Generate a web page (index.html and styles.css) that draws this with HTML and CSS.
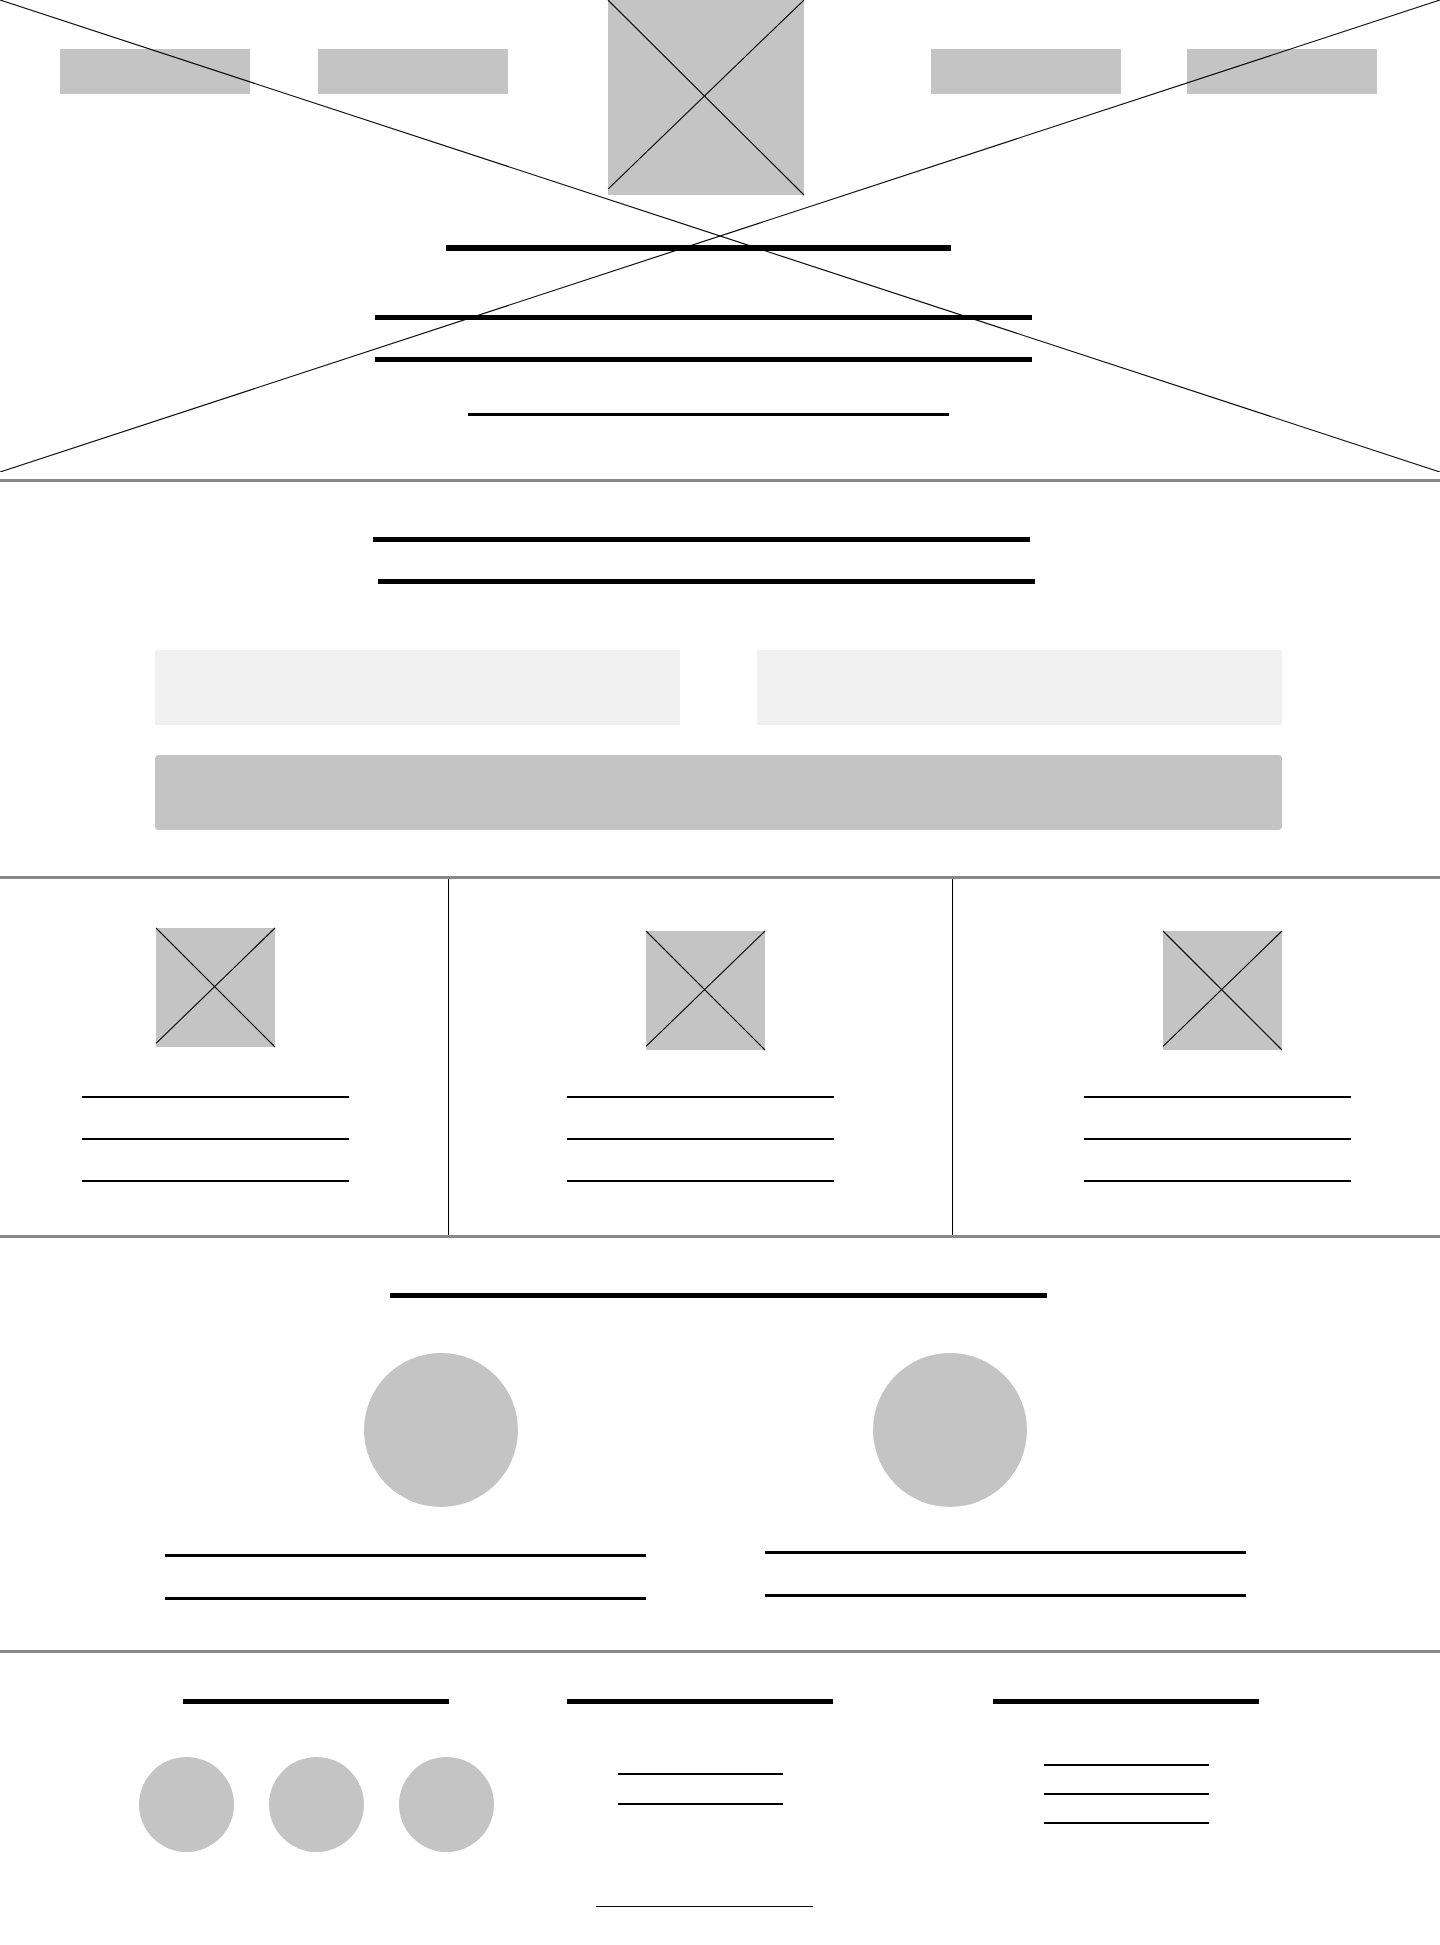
FILE: index.html
```html
<!DOCTYPE html>
<html lang="en">
<head>
  <meta charset="UTF-8">
  <meta name="viewport" content="width=device-width, initial-scale=1.0">
  <title>Landing page wireframe</title>
  <link rel="stylesheet" href="styles.css">
</head>
<body>
  <header class="hero">
    <nav class="nav">
      <div class="nav-group nav-left">
        <a class="nav-item" href="#"></a>
        <a class="nav-item" href="#"></a>
      </div>
      <div class="logo ph">
        <svg class="ph-x" viewBox="0 0 100 100" preserveAspectRatio="none"><line x1="0" y1="0" x2="100" y2="100"/><line x1="100" y1="0" x2="0" y2="97"/></svg>
      </div>
      <div class="nav-group nav-right">
        <a class="nav-item" href="#"></a>
        <a class="nav-item" href="#"></a>
      </div>
    </nav>

    <div class="bar hero-title"></div>
    <div class="bar hero-sub"></div>
    <div class="bar hero-sub hero-sub-2"></div>
    <div class="bar hero-cta"></div>

    <svg class="hero-x" viewBox="0 0 1440 472" preserveAspectRatio="none"><line x1="0" y1="0" x2="1440" y2="472"/><line x1="0" y1="472" x2="1440" y2="0"/></svg>
  </header>

  <section class="signup">
    <div class="bar signup-title"></div>
    <div class="bar signup-title signup-title-2"></div>
    <div class="signup-fields">
      <div class="field"></div>
      <div class="field"></div>
    </div>
    <div class="signup-button"></div>
  </section>

  <section class="features">
    <div class="feature feature-1">
      <div class="feature-img ph">
        <svg class="ph-x" viewBox="0 0 100 100" preserveAspectRatio="none"><line x1="0" y1="0" x2="100" y2="100"/><line x1="100" y1="0" x2="0" y2="97"/></svg>
      </div>
      <div class="feature-text">
        <div class="line feature-line"></div>
        <div class="line feature-line"></div>
        <div class="line feature-line"></div>
      </div>
    </div>
    <div class="feature feature-2">
      <div class="feature-img ph">
        <svg class="ph-x" viewBox="0 0 100 100" preserveAspectRatio="none"><line x1="0" y1="0" x2="100" y2="100"/><line x1="100" y1="0" x2="0" y2="97"/></svg>
      </div>
      <div class="feature-text">
        <div class="line feature-line"></div>
        <div class="line feature-line"></div>
        <div class="line feature-line"></div>
      </div>
    </div>
    <div class="feature feature-3">
      <div class="feature-img ph">
        <svg class="ph-x" viewBox="0 0 100 100" preserveAspectRatio="none"><line x1="0" y1="0" x2="100" y2="100"/><line x1="100" y1="0" x2="0" y2="97"/></svg>
      </div>
      <div class="feature-text">
        <div class="line feature-line"></div>
        <div class="line feature-line"></div>
        <div class="line feature-line"></div>
      </div>
    </div>
  </section>

  <section class="team">
    <div class="bar team-title"></div>
    <div class="team-avatars">
      <div class="avatar"></div>
      <div class="avatar"></div>
    </div>
    <div class="team-bios">
      <div class="bio">
        <div class="bio-line"></div>
        <div class="bio-line"></div>
      </div>
      <div class="bio bio-right">
        <div class="bio-line"></div>
        <div class="bio-line"></div>
      </div>
    </div>
  </section>

  <footer class="footer">
    <div class="footer-cols">
      <div class="footer-col">
        <div class="bar footer-title"></div>
        <div class="socials">
          <span class="social"></span>
          <span class="social"></span>
          <span class="social"></span>
        </div>
      </div>
      <div class="footer-col footer-col-2">
        <div class="bar footer-title"></div>
        <div class="links links-2">
          <div class="line link"></div>
          <div class="line link"></div>
        </div>
      </div>
      <div class="footer-col footer-col-3">
        <div class="bar footer-title"></div>
        <div class="links links-3">
          <div class="line link"></div>
          <div class="line link"></div>
          <div class="line link"></div>
        </div>
      </div>
    </div>
    <div class="copyright"></div>
  </footer>
</body>
</html>
```

FILE: styles.css
```css
body {
  margin: 0;
  width: 1440px;
  background-color: #ffffff;
  font-family: 'Liberation Sans', Arial, sans-serif;
  color: #000;
}
.bar {
  background-color: #000;
  height: 5px;
}
.line {
  background-color: #000;
  height: 2px;
}
.ph {
  position: relative;
  background-color: #c4c4c4;
}
.ph-x {
  position: absolute;
  left: 0;
  top: 0;
  width: 100%;
  height: 100%;
  overflow: visible;
}
.ph-x line,
.hero-x line {
  stroke: #000;
  stroke-width: 1.1;
  vector-effect: non-scaling-stroke;
}

/* hero */
.hero {
  position: relative;
  height: 479px;
  border-bottom: 3px solid #888888;
  overflow: hidden;
}
.hero-x {
  position: absolute;
  left: 0;
  top: 0;
  width: 1440px;
  height: 472px;
  pointer-events: none;
}
.nav {
  display: flex;
  align-items: flex-start;
  padding-left: 60px;
}
.nav-group {
  display: flex;
  margin-top: 49px;
}
.nav-left {
  gap: 68px;
}
.nav-right {
  gap: 66px;
}
.nav-item {
  display: block;
  width: 190px;
  height: 45px;
  background-color: #c4c4c4;
}
.logo {
  width: 196px;
  height: 195px;
  margin: 0 127px 0 100px;
}
.hero-title {
  width: 505px;
  height: 6px;
  margin: 50px 0 0 446px;
}
.hero-sub {
  width: 657px;
  margin: 64px 0 0 375px;
}
.hero-sub-2 {
  margin-top: 37px;
}
.hero-cta {
  width: 481px;
  height: 3px;
  margin: 51px 0 0 468px;
}

/* signup */
.signup {
  padding: 55px 0 46px;
  border-bottom: 3px solid #888888;
}
.signup-title {
  width: 657px;
  margin-left: 373px;
}
.signup-title-2 {
  margin-top: 37px;
  margin-left: 378px;
}
.signup-fields {
  display: flex;
  gap: 77px;
  margin: 66px 0 0 155px;
}
.field {
  width: 525px;
  height: 75px;
  background-color: #f1f1f1;
}
.signup-button {
  width: 1127px;
  height: 75px;
  margin: 30px 0 0 155px;
  background-color: #c4c4c4;
  border-radius: 4px;
}

/* features */
.features {
  display: grid;
  grid-template-columns: 449px 504px 487px;
  height: 356px;
  border-bottom: 3px solid #888888;
}
.feature {
  display: flex;
  flex-direction: column;
  align-items: flex-start;
  padding-top: 52px;
}
.feature-1 {
  padding-left: 82px;
  border-right: 1px solid #000;
}
.feature-2 {
  padding-left: 118px;
  border-right: 1px solid #000;
}
.feature-3 {
  padding-left: 131px;
}
.feature-img {
  width: 119px;
  height: 119px;
  margin-left: 79px;
}
.feature-1 .feature-img {
  margin: -3px 0 3px 74px;
}
.feature-text {
  display: flex;
  flex-direction: column;
  gap: 40px;
  margin-top: 46px;
}
.feature-line {
  width: 267px;
}

/* team */
.team {
  height: 357px;
  padding-top: 55px;
  border-bottom: 3px solid #888888;
}
.team-title {
  width: 657px;
  margin-left: 390px;
}
.team-avatars {
  display: flex;
  gap: 355px;
  margin: 55px 0 0 364px;
}
.avatar {
  width: 154px;
  height: 154px;
  border-radius: 50%;
  background-color: #c4c4c4;
}
.team-bios {
  display: flex;
  gap: 119px;
  margin: 47px 0 0 165px;
}
.bio {
  display: flex;
  flex-direction: column;
  gap: 40px;
}
.bio-right {
  margin-top: -3px;
}
.bio-line {
  width: 481px;
  height: 3px;
  background-color: #000;
}

/* footer */
.footer {
  height: 292px;
  padding-top: 46px;
  box-sizing: border-box;
}
.footer-cols {
  display: flex;
  align-items: flex-start;
  padding-left: 183px;
}
.footer-col {
  display: flex;
  flex-direction: column;
  align-items: center;
  width: 266px;
}
.footer-col-2 {
  margin-left: 118px;
}
.footer-col-3 {
  margin-left: 160px;
}
.footer-title {
  width: 266px;
}
.socials {
  display: flex;
  gap: 35px;
  margin-top: 53px;
}
.social {
  flex: none;
  width: 95px;
  height: 95px;
  border-radius: 50%;
  background-color: #c4c4c4;
}
.links {
  display: flex;
  flex-direction: column;
  gap: 28px;
}
.links-2 {
  margin-top: 69px;
}
.links-3 {
  margin-top: 60px;
  gap: 27px;
}
.link {
  width: 165px;
}
.copyright {
  width: 217px;
  height: 1px;
  margin: 54px 0 0 596px;
  background-color: #111;
}
```
